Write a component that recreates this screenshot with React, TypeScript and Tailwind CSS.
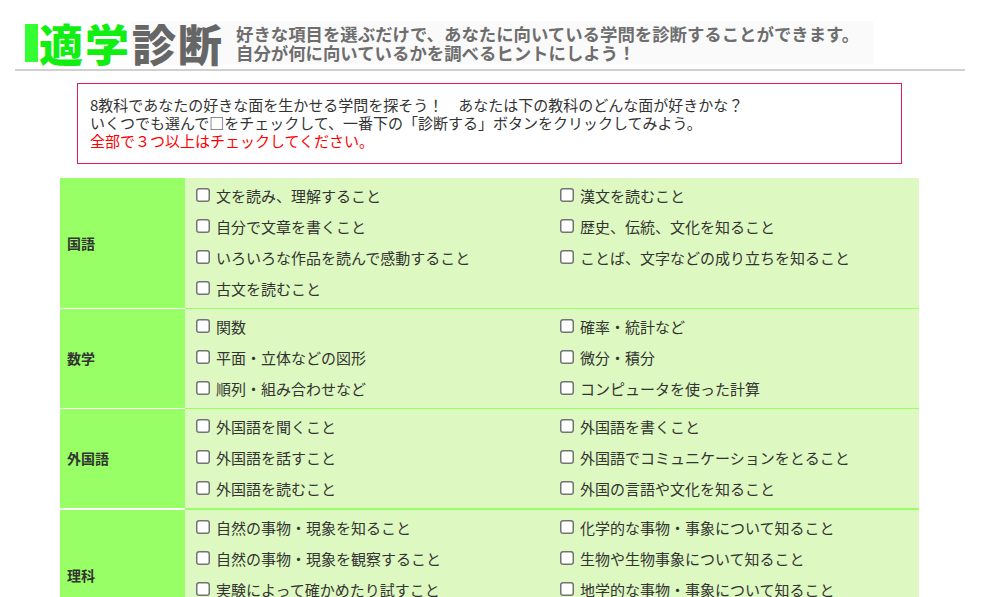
import React from "react";

type Subject = {
  name: string;
  left: string[];
  right: string[];
  divider: string;
};

const subjects: Subject[] = [
  {
    name: "国語",
    left: [
      "文を読み、理解すること",
      "自分で文章を書くこと",
      "いろいろな作品を読んで感動すること",
      "古文を読むこと",
    ],
    right: ["漢文を読むこと", "歴史、伝統、文化を知ること", "ことば、文字などの成り立ちを知ること"],
    divider: "",
  },
  {
    name: "数学",
    left: ["関数", "平面・立体などの図形", "順列・組み合わせなど"],
    right: ["確率・統計など", "微分・積分", "コンピュータを使った計算"],
    divider: "border-t",
  },
  {
    name: "外国語",
    left: ["外国語を聞くこと", "外国語を話すこと", "外国語を読むこと"],
    right: ["外国語を書くこと", "外国語でコミュニケーションをとること", "外国の言語や文化を知ること"],
    divider: "border-t",
  },
  {
    name: "理科",
    left: [
      "自然の事物・現象を知ること",
      "自然の事物・現象を観察すること",
      "実験によって確かめたり試すこと",
      "物理的な事物・事象について知ること",
    ],
    right: ["化学的な事物・事象について知ること", "生物や生物事象について知ること", "地学的な事物・事象について知ること"],
    divider: "border-t-2",
  },
];

// Square tick box drawn as a rounded outline; the real input sits hidden inside the label.
function Item({ label }: { label: string }) {
  return (
    <label className="flex h-[31px] items-center">
      <input type="checkbox" className="peer sr-only" />
      <span className="mb-[4px] mr-[6px] h-[14px] w-[14px] shrink-0 rounded-[3px] bg-white shadow-[inset_0_0_0_1.5px_#737373] peer-checked:bg-[#0075ff]" />
      <span className="whitespace-nowrap">{label}</span>
    </label>
  );
}

function SubjectRow({ s }: { s: Subject }) {
  return (
    <div className="flex">
      <div
        className={`flex w-[125px] shrink-0 items-center bg-[#99ff66] pl-[7px] text-[14px] font-bold text-[#333] ${s.divider} border-white`}
      >
        {s.name}
      </div>
      <div
        className={`grid flex-1 grid-cols-[364px_1fr] bg-[#ddf8c0] py-[3px] pl-[11px] ${s.divider} border-[#99ff66]`}
      >
        <div className="flex flex-col">
          {s.left.map((t) => (
            <Item key={t} label={t} />
          ))}
        </div>
        <div className="flex flex-col">
          {s.right.map((t) => (
            <Item key={t} label={t} />
          ))}
        </div>
      </div>
    </div>
  );
}

export default function App() {
  return (
    <div
      className="min-h-[597px] w-full bg-white text-[#333]"
      style={{ fontFamily: '"Noto Sans CJK JP", "Noto Sans", sans-serif' }}
    >
      {/* title banner */}
      <div className="ml-[15px] w-[950px] border-b-2 border-[#d0d0d0] pb-[5px] pt-[21px]">
        <div className="flex w-[858px] items-center">
          <div className="ml-[10px] h-[38px] w-[13px] bg-[#33ff33]" />
          <div className="flex h-[43px] items-center text-[44px] font-black leading-none tracking-[2px]">
            <span className="ml-[1px] text-[#11ee11]">適学</span>
            <span className="bg-[#fafafa] pl-[1px] text-[#666]">診断</span>
          </div>
          <div className="flex h-[43px] flex-1 flex-col justify-center bg-[#fafafa] pl-[12px] text-[17.4px] font-bold leading-[19px] text-[#6e6e6e]">
            <span>好きな項目を選ぶだけで、あなたに向いている学問を診断することができます。</span>
            <span>自分が何に向いているかを調べるヒントにしよう！</span>
          </div>
        </div>
      </div>

      {/* instructions, framed in crimson */}
      <div className="ml-[77px] mt-[12px] w-[825px] bg-[#dc1a5c] p-[1px]">
        <div className="h-[79px] bg-white pl-[12px] pt-[12px] text-[15px] leading-[18px] text-[#333]">
          <p>8教科であなたの好きな面を生かせる学問を探そう！　あなたは下の教科のどんな面が好きかな？</p>
          <p>いくつでも選んで□をチェックして、一番下の「診断する」ボタンをクリックしてみよう。</p>
          <p className="text-[#ff0000]">全部で３つ以上はチェックしてください。</p>
        </div>
      </div>

      {/* subject checklist */}
      <div className="ml-[60px] mt-[14px] w-[859px] text-[15px] text-[#333]">
        {subjects.map((s) => (
          <SubjectRow key={s.name} s={s} />
        ))}
      </div>
    </div>
  );
}
